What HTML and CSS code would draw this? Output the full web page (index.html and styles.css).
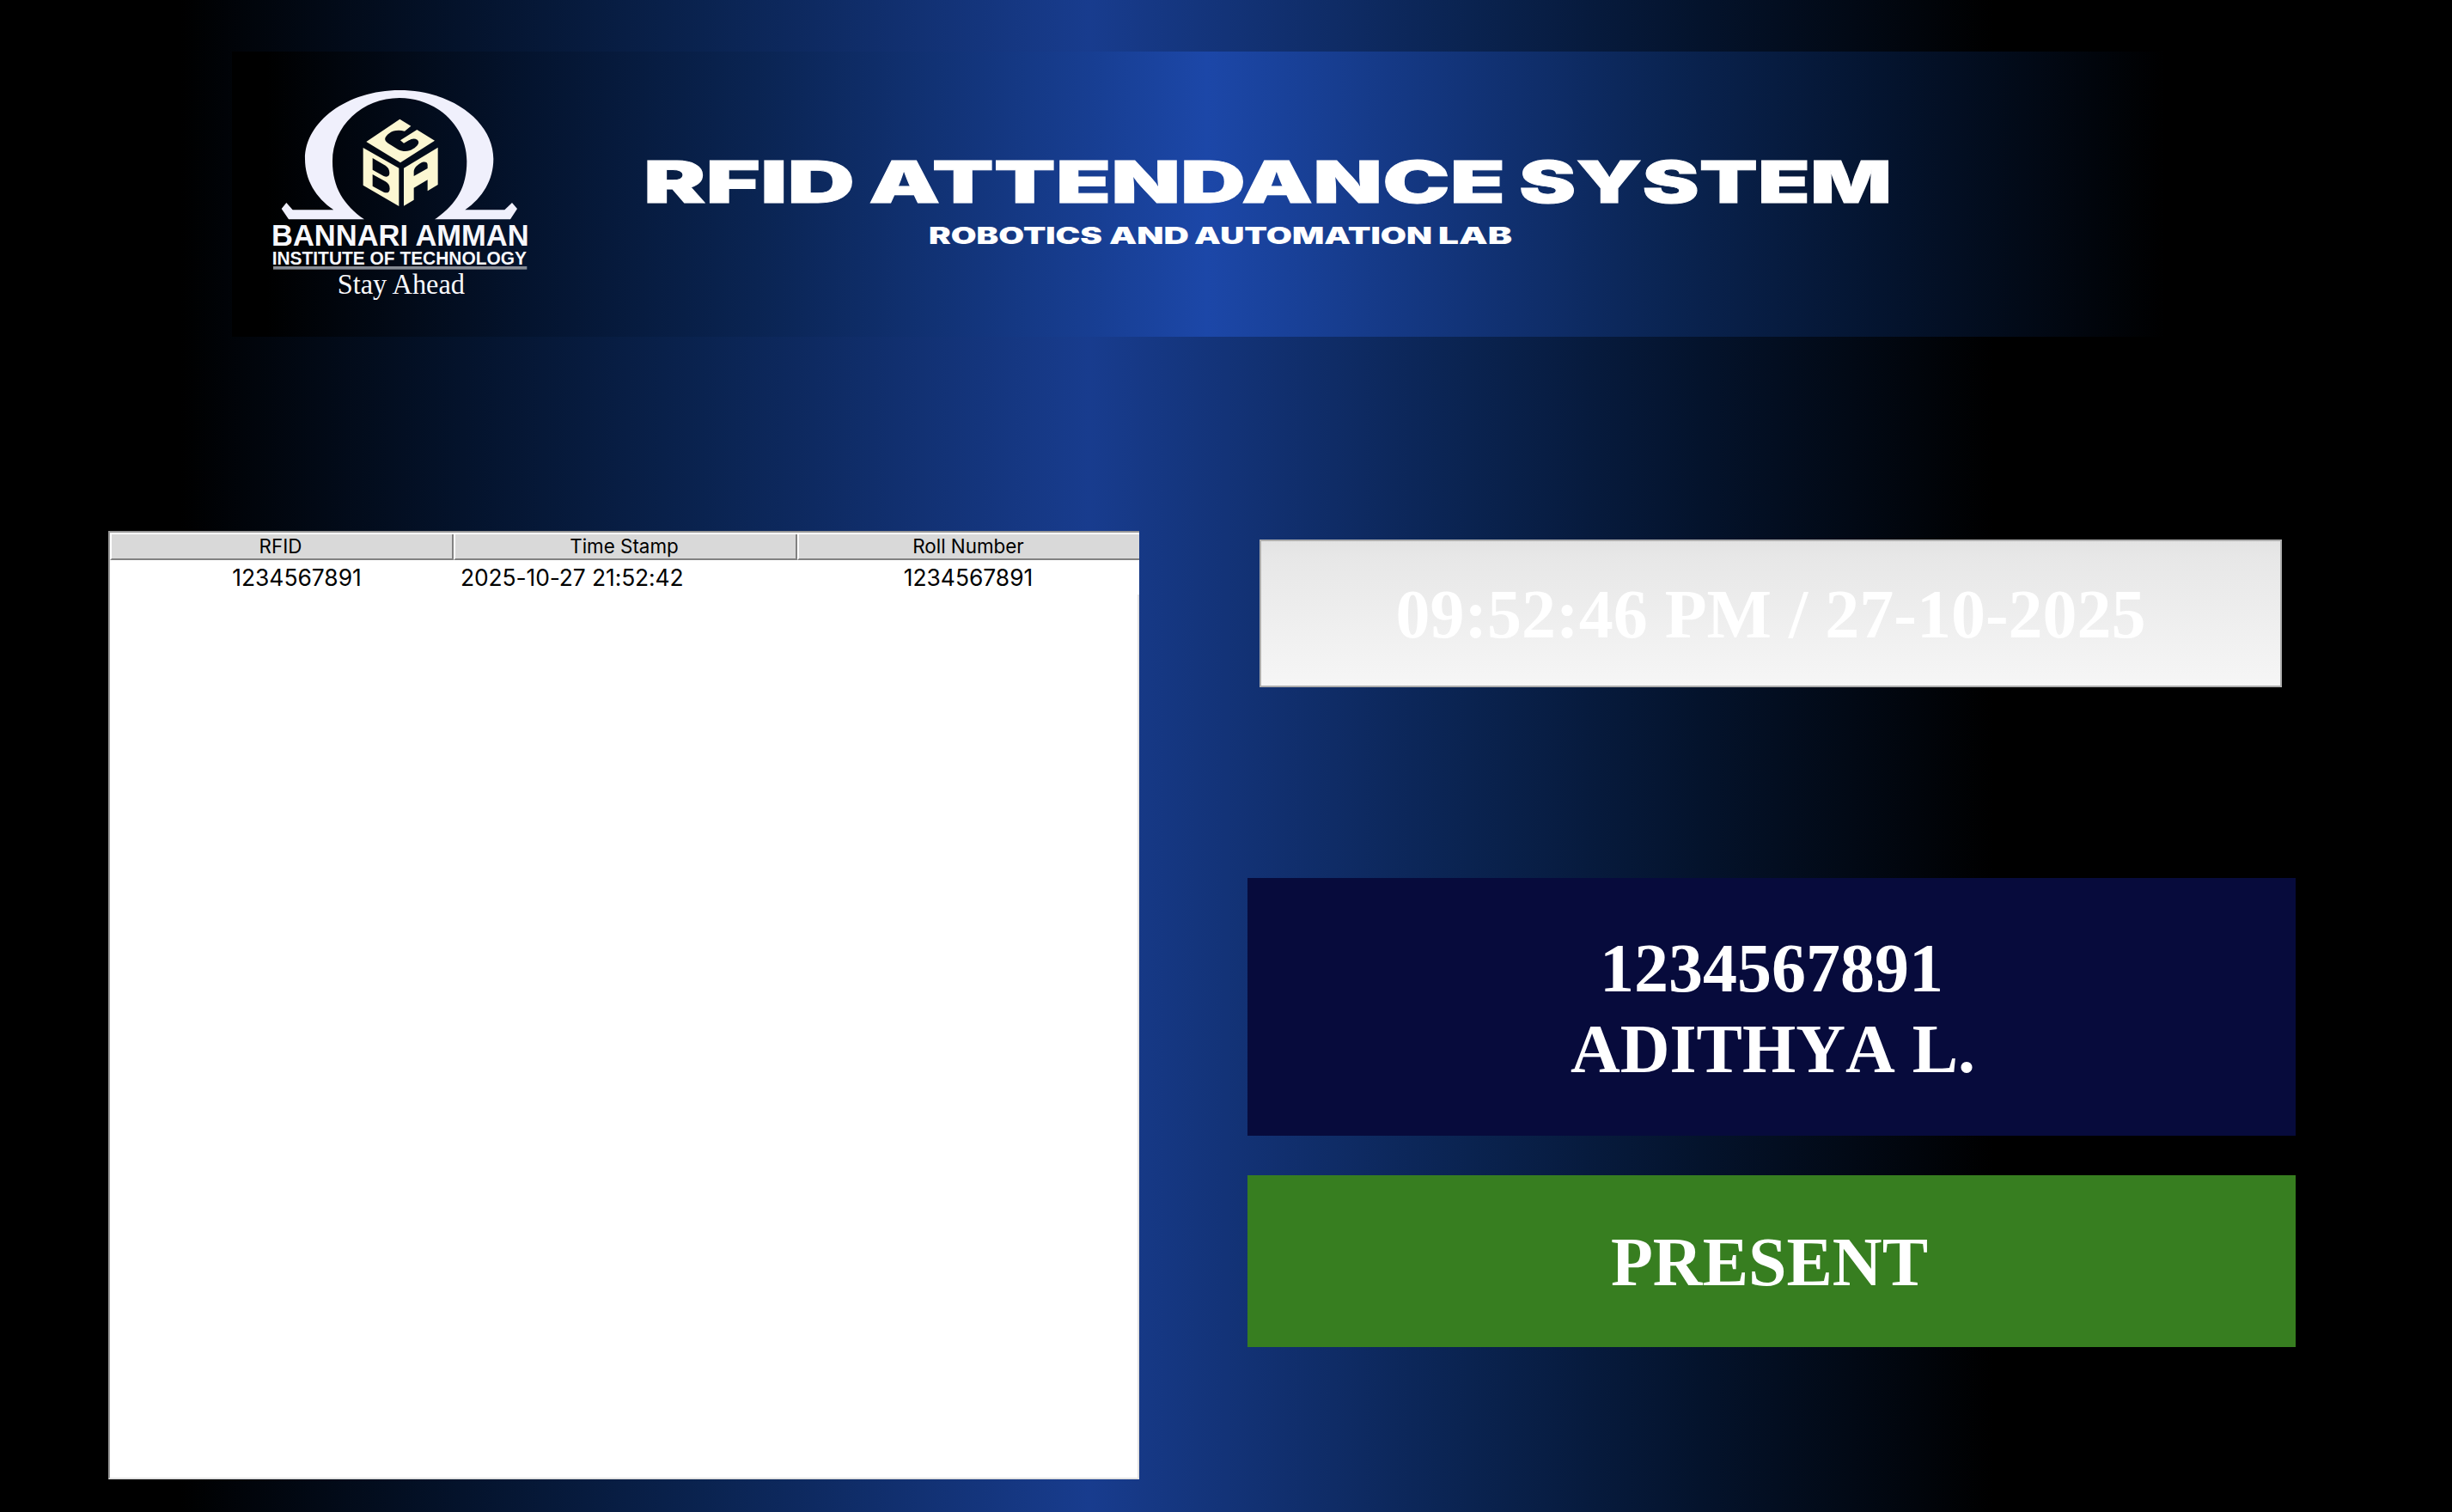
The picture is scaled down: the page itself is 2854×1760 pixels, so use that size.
FILE: index.html
```html
<!DOCTYPE html>
<html lang="en">
<head>
<meta charset="utf-8">
<title>RFID Attendance System</title>
<link rel="stylesheet" href="styles.css">
</head>
<body>
<div class="app">
  <header class="banner">
    <svg class="banner-art" viewBox="270 60 2256 332" width="2256" height="332" role="img" aria-label="RFID Attendance System">
      <g transform="translate(250 50) scale(.33333)">
        <path class="omega" d="M258 616 L233 579 L250 558 L272 583 H415 C352 540 315 478 315 405 C315 275 462 165 645 165 C828 165 973 275 973 405 C973 478 936 540 874 583 H1012 L1038 558 L1056 579 L1032 616 H768 C842 565 880 505 880 413 C880 290 775 192 645 192 C515 192 411 290 411 413 C411 505 450 565 522 616 Z"/>
        <g class="cube">
          <path d="M646 266 L685 290 L663 308 C640 303 622 306 610 315 C592 328 589 339 605 350 L640 372 C658 381 678 380 692 370 C708 360 718 348 707 338 C697 331 686 335 678 340 L660 350 L648 340 L706 303 L768 341 L648 418 L529 345 Z"/>
          <path fill-rule="evenodd" d="M518 366 L643 437 V570 L518 497 Z M551 402 V443 L590 465 C602 470 610 466 610 454 C610 442 605 434 596 428 Z M551 459 V500 L590 521 C602 526 611 522 611 509 C611 497 605 489 596 484 Z"/>
          <path fill-rule="evenodd" d="M660 437 L779 365 V495 L743 517 V478 L695 506 V548 L660 569 Z M695 465 L743 438 V426 C743 414 730 413 718 420 C704 428 695 438 695 450 Z"/>
        </g>
        <g class="logo-text">
          <text class="logo-name" x="198" y="707" textLength="899" lengthAdjust="spacingAndGlyphs">BANNARI AMMAN</text>
          <text class="logo-sub" x="200" y="773" textLength="889" lengthAdjust="spacingAndGlyphs">INSTITUTE OF TECHNOLOGY</text>
          <rect class="logo-rule" x="204" y="780" width="886" height="11"/>
          <text class="logo-motto" x="428" y="875" textLength="445" lengthAdjust="spacingAndGlyphs">Stay Ahead</text>
        </g>
      </g>
      <g class="title">
        <text x="749" y="236" textLength="246" lengthAdjust="spacingAndGlyphs">RFID</text>
        <text x="1011" y="236" textLength="741" lengthAdjust="spacingAndGlyphs">ATTENDANCE</text>
        <text x="1768" y="236" textLength="434" lengthAdjust="spacingAndGlyphs">SYSTEM</text>
      </g>
      <g class="subtitle">
        <text x="1081" y="284" textLength="202" lengthAdjust="spacingAndGlyphs">ROBOTICS</text>
        <text x="1291" y="284" textLength="93" lengthAdjust="spacingAndGlyphs">AND</text>
        <text x="1390" y="284" textLength="277" lengthAdjust="spacingAndGlyphs">AUTOMATION</text>
        <text x="1674" y="284" textLength="86" lengthAdjust="spacingAndGlyphs">LAB</text>
      </g>
    </svg>
  </header>
  <main class="content">
    <section class="log">
      <div class="row head">
        <div class="cell">RFID</div><div class="cell">Time Stamp</div><div class="cell">Roll Number</div>
      </div>
      <div class="row">
        <div class="cell rfid">1234567891</div><div class="cell stamp">2025-10-27 21:52:42</div><div class="cell">1234567891</div>
      </div>
    </section>
    <section class="status">
      <div class="clock"><span class="clock-text">09:52:46 PM / 27-10-2025</span></div>
      <div class="student"><div>1234567891</div><div class="name">ADITHYA L.</div></div>
      <div class="present">PRESENT</div>
    </section>
  </main>
</div>
</body>
</html>
```
FILE: styles.css
```css
* { box-sizing: border-box; }
body { margin: 0; background: #000; }
.app {
  width: 2854px;
  height: 1760px;
  overflow: hidden;
  padding-top: 60px;
  background: linear-gradient(90deg, #000 210px, #04132c 540px, #0a2350 820px, #183c8e 1268px, #0a2350 1710px, #04132c 1980px, #000 2320px);
}
.banner {
  width: 2256px;
  height: 332px;
  margin-left: 270px;
  background: linear-gradient(90deg, #000 40px, #04142f 350px, #0a2452 610px, #1c47a8 1135px, #0a2452 1670px, #04142f 1920px, #000 2250px);
}
.banner-art { display: block; }
.omega { fill: #f0f0fc; }
.cube { fill: #fcf7d2; }
.logo-text { fill: #f8f8fc; }
.logo-name { font: bold 104px "Liberation Sans", Arial, sans-serif; }
.logo-sub { font: bold 64px "Liberation Sans", Arial, sans-serif; }
.logo-motto { font: 102px "Liberation Serif", "Times New Roman", serif; }
.logo-rule { fill: #868b94; }
.title { fill: #fff; stroke: #fff; stroke-width: .8px; font: 900 67.5px Inter, sans-serif; }
.subtitle { fill: #fff; font: 900 26.5px Inter, sans-serif; }
.content { display: flex; align-items: flex-start; padding: 226px 0 0 126px; }
.log {
  width: 1200px;
  height: 1104px;
  background: linear-gradient(#e2e2e2, #e2e2e2) right 72px / 2px 100% no-repeat #fff;
  background-position: right 0 top 72px;
  border-top: 2px solid #999;
  border-left: 2px solid #999;
  border-bottom: 2px solid #e2e2e2;
  padding-top: 2px;
  font: 26.4px/41px Inter, "Helvetica Neue", sans-serif;
  color: #000;
}
.row { display: grid; grid-template-columns: 400px 400px 398px; text-align: center; }
.row .rfid { padding-left: 35px; }
.row .stamp { padding-left: 8px; text-align: left; letter-spacing: -.1px; }
.head { font-size: 22.4px; line-height: 28px; }
.head .cell {
  padding: 0 5px 0 0;
  height: 30px;
  background: #d9d9d9;
  border-left: 2px solid #fff;
  border-bottom: 2px solid #828282;
  box-shadow: inset -2px 0 #828282;
}
.head .cell:last-child { padding-right: 2px; box-shadow: none; }
.status {
  width: 1220px;
  margin-left: 126px;
  padding-top: 10px;
  font: bold 80px/94px "Liberation Serif", "Times New Roman", serif;
  color: #fff;
  text-align: center;
}
.clock {
  width: 1190px;
  height: 172px;
  margin: 0 0 222px 14px;
  padding-top: 38px;
  border: 2px solid #adadad;
  background: linear-gradient(#e3e3e3, #e7e7e7 10%, #f6f6f6);
}
.student { height: 300px; margin-bottom: 46px; padding-top: 58px; background: #070b3c; }
.name { font-kerning: none; padding-left: 3px; }
.present { height: 200px; padding: 54px 5px 0 0; background: #377e20; }
```
